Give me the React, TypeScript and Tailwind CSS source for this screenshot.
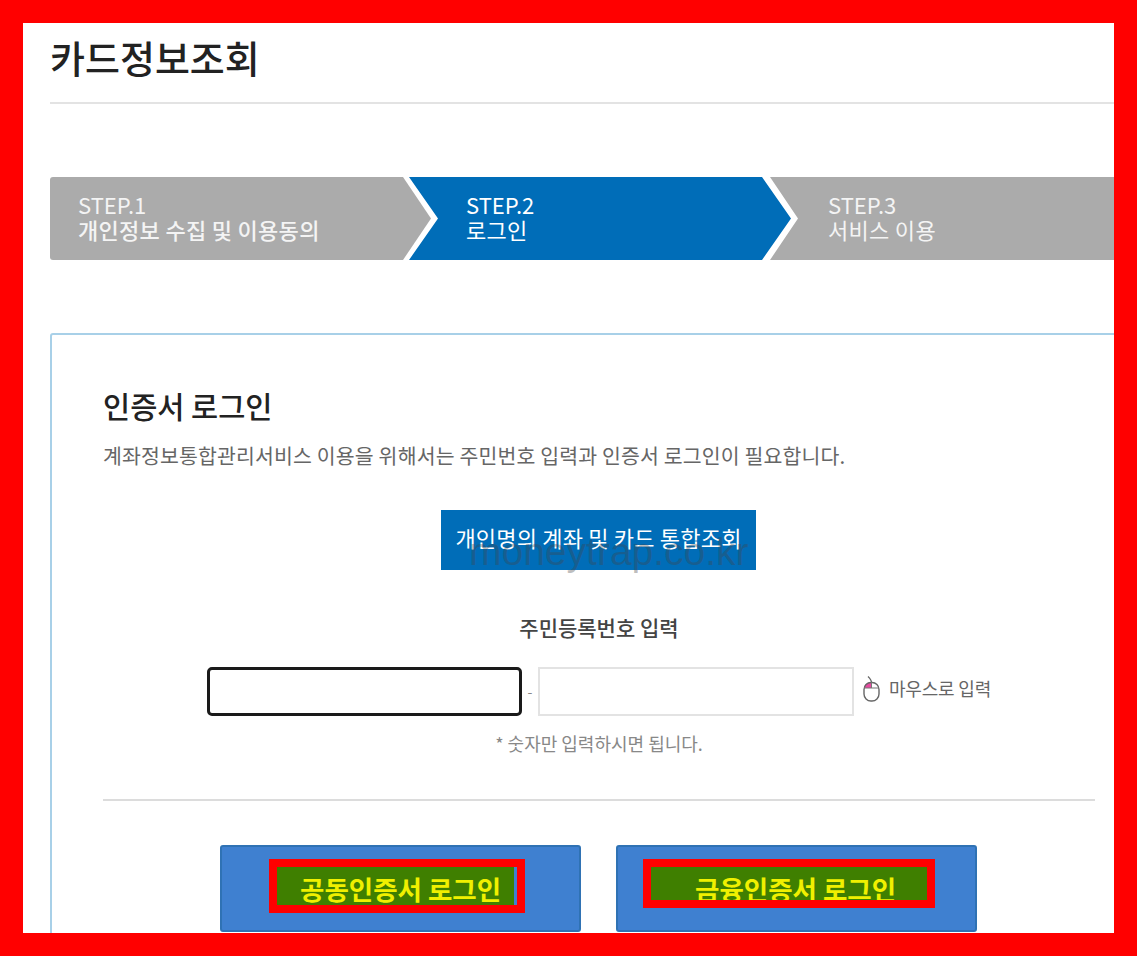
const font = "font-['Noto_Sans_CJK_KR','Liberation_Sans',sans-serif]"

function MouseIcon() {
  return (
    <svg width="18" height="26" viewBox="0 0 18 26" fill="none" className="block">
      {/* cord */}
      <path d="M8.5 6.5 C8.5 4 7 2.5 5 0.5" stroke="#666" strokeWidth="1.2" />
      {/* left button */}
      <path d="M1.2 12 C1.2 8.5 4 6.5 8.5 6.5 L8.5 12 Z" fill="#e84aa0" />
      {/* body */}
      <rect x="1" y="6.5" width="15" height="18.5" rx="7" stroke="#666" strokeWidth="1.4" />
      <path d="M1 12 H16 M8.5 6.5 V12" stroke="#777" strokeWidth="1" />
    </svg>
  )
}

function Steps() {
  return (
    <div className="flex h-[83px] ml-[27px] text-[22px] leading-[25px]">
      {/* Step 1 */}
      <div className="w-[381px] shrink-0 rounded-l-[3px] bg-[#ababab] text-[#f4f4f4] pl-[28px] pt-[15px] [clip-path:polygon(0_0,353px_0,381px_50%,353px_100%,0_100%)]">
        <p>STEP.1</p>
        <p className="font-medium tracking-[0.3px]">개인정보 수집 및 이용동의</p>
      </div>
      {/* Step 2 */}
      <div className="w-[382px] shrink-0 -ml-[22px] bg-[#006db8] text-white pl-[57px] pt-[15px] [clip-path:polygon(0_0,353px_0,382px_50%,353px_100%,0_100%,29px_50%)]">
        <p>STEP.2</p>
        <p className="tracking-[0.3px]">로그인</p>
      </div>
      {/* Step 3 */}
      <div className="w-[400px] shrink-0 -ml-[21px] bg-[#ababab] text-[#f4f4f4] pl-[58px] pt-[15px] [clip-path:polygon(0_0,100%_0,100%_100%,0_100%,28px_50%)]">
        <p>STEP.3</p>
        <p className="tracking-[0.3px]">서비스 이용</p>
      </div>
    </div>
  )
}

export default function App() {
  return (
    <div className={`w-[1137px] h-[956px] border-[23px] border-[#ff0000] bg-white overflow-hidden ${font}`}>
      {/* Title */}
      <div className="h-[81px] ml-[27px] border-b-2 border-[#e3e3e3]">
        <h1 className="text-[38px] leading-[68px] font-medium text-[#222]">카드정보조회</h1>
      </div>

      <div className="mt-[73px]">
        <Steps />
      </div>

      {/* Login card */}
      <div className="mt-[73px] ml-[27px] w-[1100px] h-[700px] border-2 border-[#a8d0e8] rounded-tl-[3px] pl-[51px] pt-[50px]">
        <h2 className="text-[29.5px] leading-[40px] font-medium text-[#222]">인증서 로그인</h2>
        <p className="mt-[18px] text-[20.5px] leading-[24px] text-[#666] tracking-[0.15px]">
          계좌정보통합관리서비스 이용을 위해서는 주민번호 입력과 인증서 로그인이 필요합니다.
        </p>

        <div className="w-[992px]">
          <div className="relative mt-[43px] ml-[338px] w-[315px] h-[60px] bg-[#006db8] flex items-center justify-center text-[22px] tracking-[0.2px] text-white">
            <span className="-mt-[6px]">개인명의 계좌 및 카드 통합조회</span>
            <span className="absolute left-[28px] top-[19px] text-[39px] leading-[46px] tracking-normal text-[#444]/35 font-['Liberation_Sans',sans-serif]">
              moneytrap.co.kr
            </span>
          </div>

          <p className="mt-[43px] text-center text-[21px] leading-[28px] font-medium text-[#444]">주민등록번호 입력</p>

          {/* Resident number inputs */}
          <div className="mt-[26px] pl-[104px] flex items-center h-[49px]">
            <input readOnly className="w-[315px] h-[49px] bg-white border-[3px] border-[#1a1a1a] rounded-[5px]" />
            <span className="w-[16px] text-center text-[#888] text-[14px]">-</span>
            <input readOnly className="w-[316px] h-[49px] bg-white border-2 border-[#e3e3e3]" />
            <div className="ml-[9px] -mt-[6px] flex items-center gap-[8px] text-[#666]">
              <MouseIcon />
              <span className="text-[18px] tracking-[-0.2px]">마우스로 입력</span>
            </div>
          </div>

          <p className="mt-[15px] text-center text-[18px] leading-[24px] text-[#888]">* 숫자만 입력하시면 됩니다.</p>

          <div className="mt-[44px] h-[2px] bg-[#dcdcdc]" />

          {/* Login buttons */}
          <div className="mt-[44px] flex pl-[117px] gap-[35px]">
            <div className="w-[361px] h-[87px] bg-[#3f80d0] border-2 border-[#2f72b4] rounded-[3px] pl-[47px] pt-[12px]">
              <div className="w-[256px] h-[54px] border-[8px] border-[#ff0000]">
                <div className="h-full overflow-hidden bg-[#3f7f00] border-r-[3px] border-[#3f80d0] text-[#f0f000] text-[26.5px] leading-[43px] font-semibold pl-[23px] whitespace-nowrap">
                  공동인증서 로그인
                </div>
              </div>
            </div>
            <div className="w-[361px] h-[87px] bg-[#3f80d0] border-2 border-[#2f72b4] rounded-[3px] pl-[25px] pt-[12px]">
              <div className="w-[292px] h-[49px] border-[8px] border-[#ff0000]">
                <div className="h-full overflow-hidden bg-[#3f7f00] text-[#f0f000] text-[26.5px] leading-[44px] font-semibold pl-[44px] whitespace-nowrap">
                  금융인증서 로그인
                </div>
              </div>
            </div>
          </div>
        </div>
      </div>
    </div>
  )
}
